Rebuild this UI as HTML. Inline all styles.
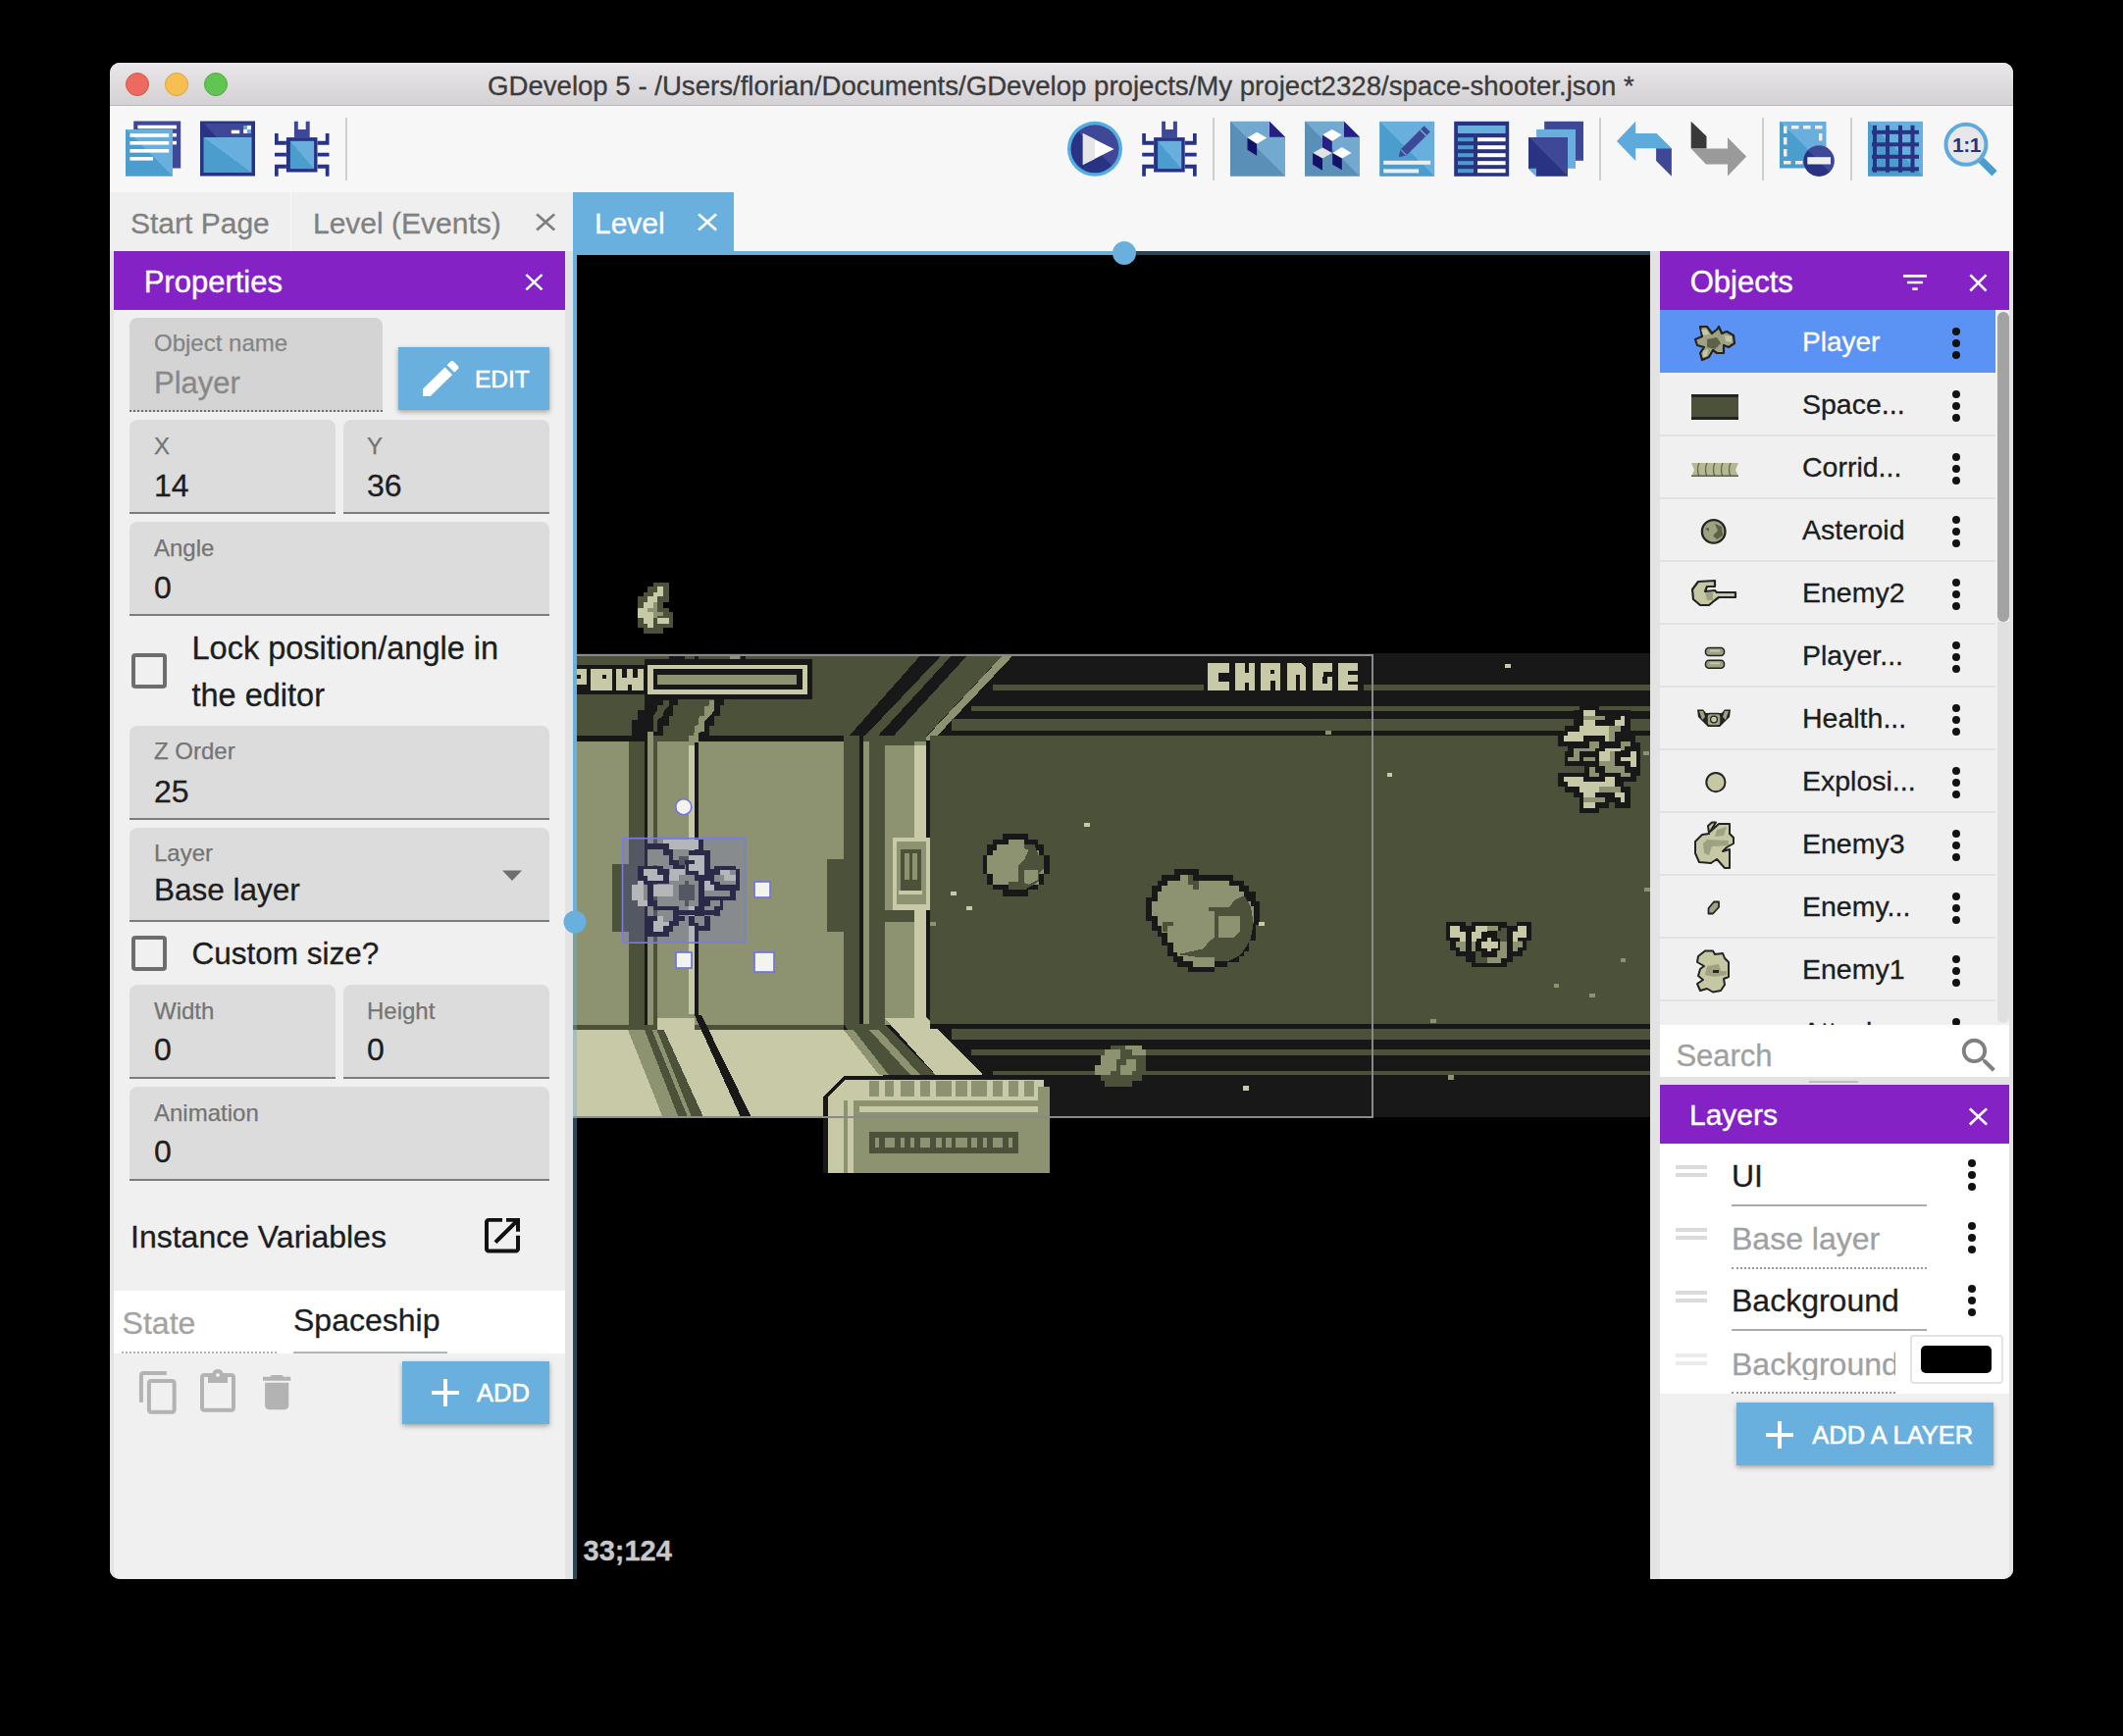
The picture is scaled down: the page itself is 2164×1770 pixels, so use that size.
<!DOCTYPE html>
<html><head><meta charset="utf-8">
<style>
*{box-sizing:border-box;margin:0;padding:0}
html,body{width:2164px;height:1770px;background:#000;overflow:hidden;font-family:"Liberation Sans",sans-serif}
.a{position:absolute}
.t{position:absolute;white-space:nowrap;line-height:1;-webkit-text-stroke:0.3px currentColor}
.fld{position:absolute;background:#dcdcdc;border-radius:8px 8px 0 0;border-bottom:2px solid #7c7c7c}
.lbl{position:absolute;white-space:nowrap;line-height:1;font-size:24px;color:#747474;-webkit-text-stroke:0.25px currentColor}
.val{position:absolute;white-space:nowrap;line-height:1;font-size:32px;color:#1d1d1d;-webkit-text-stroke:0.3px currentColor}
.hdr{position:absolute;background:#8422c6}
.hdrt{position:absolute;white-space:nowrap;line-height:1;font-size:31px;color:#fff;-webkit-text-stroke:0.4px currentColor}
.orow{position:absolute;left:1692px;width:342px;height:64px;border-bottom:2px solid #e2e2e2}
.ot{-webkit-text-stroke:0.3px currentColor;position:absolute;left:145px;top:18px;white-space:nowrap;line-height:1;font-size:28px;color:#1d1d1d}
.dots{position:absolute;width:8px;height:32px}
.dots i{position:absolute;left:0;width:8px;height:8px;border-radius:50%;background:#111}
.dots i:nth-child(1){top:0}.dots i:nth-child(2){top:12px}.dots i:nth-child(3){top:24px}
</style></head><body>
<!-- window base -->
<div class="a" style="left:112px;top:64px;width:1940px;height:1546px;border-radius:10px;background:#f7f7f7"></div>
<!-- title bar -->
<div class="a" style="left:112px;top:64px;width:1940px;height:44px;border-radius:10px 10px 0 0;background:linear-gradient(#e9e7e9,#d3d1d3);border-bottom:1px solid #bab8ba"></div>
<div class="a" style="left:128px;top:74px;width:24px;height:24px;border-radius:50%;background:#ee6a5f;border:1px solid #d8554b"></div>
<div class="a" style="left:168px;top:74px;width:24px;height:24px;border-radius:50%;background:#f6bf4f;border:1px solid #dea236"></div>
<div class="a" style="left:208px;top:74px;width:24px;height:24px;border-radius:50%;background:#61c554;border:1px solid #4fa83f"></div>
<div class="t" style="left:497px;top:73.6px;font-size:27.6px;color:#3b3b3b">GDevelop 5 - /Users/florian/Documents/GDevelop projects/My project2328/space-shooter.json *</div>

<svg class="a" style="left:0;top:0" width="2164" height="200" viewBox="0 0 2164 200">
<defs>
 <linearGradient id="gLB" x1="0" y1="1" x2="1" y2="0"><stop offset="0.5" stop-color="#4a9dcd"/><stop offset="0.5" stop-color="#68afde"/></linearGradient>
 <linearGradient id="gFile" x1="0" y1="1" x2="1" y2="0"><stop offset="0.5" stop-color="#5a90b8"/><stop offset="0.5" stop-color="#74a9cf"/></linearGradient>
 <linearGradient id="gFile2" x1="0" y1="0" x2="1" y2="1"><stop offset="0.5" stop-color="#68afde"/><stop offset="0.5" stop-color="#4a9dcd"/></linearGradient>
 <linearGradient id="gNavy" x1="0" y1="0" x2="1" y2="1"><stop offset="0.5" stop-color="#3f4896"/><stop offset="0.5" stop-color="#283384"/></linearGradient>
 <linearGradient id="gNavy2" x1="0" y1="1" x2="1" y2="0"><stop offset="0.5" stop-color="#283384"/><stop offset="0.5" stop-color="#3f4896"/></linearGradient>
 <g id="bug">
  <rect x="12.4" y="16.3" width="31.6" height="35.4" fill="#283384"/>
  <rect x="16.4" y="20" width="24.2" height="28.3" fill="url(#gLB)"/>
  <path d="M20.4 0h3.9v8.2h7.9V0h4v16.3H20.4z" fill="#3f4896"/>
  <path d="M0.5 12.1h3.7v7.9h8.2v4H0.5z M0.5 32h11.9v3.8H0.5z M0.5 44h11.9v4H4.2v8H0.5z" fill="#283384"/>
  <path d="M56 12.1h-3.7v7.9h-8.2v4H56z M56 32H44.1v3.8H56z M56 44H44.1v4h8.2v8H56z" fill="#283384"/>
 </g>
 <g id="page">
  <path d="M0 0H40L56 16V56H0z" fill="url(#gFile)"/>
  <path d="M40 0V16H56z" fill="#271f86"/>
 </g>
</defs>
<!-- icon1 project manager -->
<g transform="translate(128,123.5)">
 <rect x="8.2" y="0" width="48" height="48" fill="#3f4896"/>
 <rect x="12.4" y="4.2" width="39.6" height="3.6" fill="#fff"/>
 <rect x="48" y="12.4" width="4" height="3.6" fill="#fff"/>
 <rect x="48" y="20.3" width="4" height="3.6" fill="#fff"/>
 <rect x="0" y="8.5" width="48" height="47.7" fill="url(#gLB)"/>
 <rect x="4.4" y="12.7" width="39.8" height="3.6" fill="#fff"/>
 <rect x="4.4" y="20.5" width="39.8" height="3.6" fill="#fff"/>
 <rect x="4.4" y="28.5" width="39.8" height="3.6" fill="#fff"/>
 <rect x="4.4" y="36.5" width="23.6" height="3.6" fill="#fff"/>
</g>
<!-- icon2 scene -->
<g transform="translate(204,123.5)">
 <rect x="0" y="0" width="56" height="56" fill="#283384"/>
 <path d="M3.5 2.5H52.5V16.5H17z" fill="#3f4896"/>
 <rect x="3.5" y="16.5" width="49" height="36" fill="url(#gLB)"/>
 <rect x="31.8" y="9.2" width="8.4" height="3.5" fill="#fff"/>
 <rect x="44.2" y="4.5" width="7.7" height="8" fill="#68afde"/>
 <rect x="44.2" y="8.5" width="3.8" height="4" fill="#fff"/>
 <rect x="48" y="4.5" width="3.9" height="4" fill="#fff"/>
</g>
<use href="#bug" transform="translate(279.5,123.8)"/>
<rect x="352" y="120" width="2" height="64" fill="#cfcfcf"/>
<!-- play -->
<g transform="translate(1088,123.8)">
 <circle cx="28" cy="28" r="28" fill="#52ade3"/>
 <circle cx="28" cy="28" r="24.5" fill="url(#gNavy2)"/>
 <path d="M15.8 12.1L47.5 28.3L15.8 44.3z" fill="#fff"/>
 <path d="M15.8 12.1L28 18.3L28 38.1L15.8 44.3z" fill="#e6e6e8"/>
</g>
<use href="#bug" transform="translate(1163.7,123.8)"/>
<rect x="1236" y="120" width="2" height="64" fill="#cfcfcf"/>
<!-- page cube 1 -->
<g transform="translate(1254,123.8)">
 <use href="#page"/>
 <path d="M17.5 16.8L27.1 11L37.3 16.8L27.1 22.9z" fill="#fff"/>
 <path d="M17.5 16.8L27.1 22.9V35L17.5 29z" fill="#12126b"/>
</g>
<!-- page cubes 3 -->
<g transform="translate(1330,123.8)">
 <use href="#page"/>
 <path d="M18 13.8L27.8 8.2L37.8 13.8L27.8 20.2z" fill="#fff"/>
 <path d="M18 13.8L27.8 20.2V32.2L18 26.6z" fill="#271f86"/>
 <path d="M8.1 32.2L18 26.6L27.8 32.2L18 37.8z" fill="#e3e3e3"/>
 <path d="M8.1 32.2L18 37.8V49.9L8.1 44z" fill="#12126b"/>
 <path d="M28.2 32.2L37.8 26.3L47.6 32.2L37.8 37.8z" fill="#fff"/>
 <path d="M28.2 32.2L37.8 37.8V49.5L28.2 44z" fill="#12126b"/>
</g>
<!-- edit pencil -->
<g transform="translate(1406.2,123.8)">
 <rect width="56" height="56" fill="url(#gLB)"/>
 <path d="M19.8 36.2L21.5 28.5L45.5 4.5L51.6 10.6L27.5 34.5z" fill="#3f4896"/>
 <path d="M19.8 36.2L21.5 28.5L27.5 34.5z" fill="#3f4896"/>
 <path d="M41.5 8.5L47.5 14.5" stroke="#68afde" stroke-width="1.6"/>
 <path d="M21.5 28.5L27.5 34.5" stroke="#68afde" stroke-width="1.2"/>
 <rect x="4" y="40" width="48" height="4" fill="#eee"/>
 <rect x="4" y="48.6" width="36" height="4" fill="#eee"/>
</g>
<!-- table -->
<g transform="translate(1482.2,123.8)">
 <rect width="56" height="56" fill="#283384"/>
 <rect x="3.7" y="4.2" width="48.7" height="8" fill="#68afde"/>
 <g fill="#4a9dcd"><rect x="3.7" y="16.4" width="16.1" height="4"/><rect x="3.7" y="24.4" width="16.1" height="4"/><rect x="3.7" y="32.4" width="16.1" height="4"/><rect x="3.7" y="40.4" width="16.1" height="4"/><rect x="3.7" y="48.4" width="16.1" height="4"/></g>
 <g fill="#fff"><rect x="23.8" y="16.4" width="28.6" height="4"/><rect x="23.8" y="24.4" width="28.6" height="4"/><rect x="23.8" y="32.4" width="28.6" height="4"/><rect x="23.8" y="40.4" width="28.6" height="4"/><rect x="23.8" y="48.4" width="28.6" height="4"/></g>
</g>
<!-- layers -->
<g transform="translate(1558,123.8)">
 <rect x="16.2" y="0" width="39.8" height="40" fill="#3f4896"/>
 <rect x="8.1" y="8.1" width="39.9" height="39.9" fill="#68afde"/>
 <path d="M0 16.2H40V56H8L0 48z" fill="url(#gNavy2)"/>
 <path d="M0 48L8 48L8 56z" fill="#68afde"/>
</g>
<rect x="1630" y="120" width="2" height="64" fill="#cfcfcf"/>
<!-- undo -->
<g transform="translate(1648,123.8)">
 <path d="M0 20.2L19.2 0V12.1H40.6L55.9 27.4H19.2V40.3z" fill="#5eaadd"/>
 <path d="M0 20.2L19.2 0V12.1L8 24z" fill="#4a9dcd" opacity="0"/>
 <path d="M40.1 27.4H55.9V56L40.1 40.3z" fill="#3f4896"/>
</g>
<!-- redo -->
<g transform="translate(1723.7,123.8)">
 <path d="M0 0L15.8 15.3V27.7H0z" fill="#393939"/>
 <path d="M0 27.7H37.3V16.4L56.5 35.8L37.3 55.6V43.8H15.3z" fill="#9a9a9a"/>
</g>
<rect x="1796" y="120" width="2" height="64" fill="#cfcfcf"/>
<!-- remove selection -->
<g transform="translate(1814,124)">
 <rect width="47.5" height="47.5" fill="url(#gLB)"/>
 <g fill="#eee">
  <rect x="12" y="4" width="7.5" height="3.5"/><rect x="24" y="4" width="7.5" height="3.5"/><rect x="36" y="4" width="7.5" height="3.5"/>
  <rect x="4" y="4.5" width="3.5" height="7.5"/><rect x="4" y="16" width="3.5" height="7.5"/><rect x="4" y="28" width="3.5" height="7.5"/>
  <rect x="4" y="40" width="7.5" height="3.5"/><rect x="16" y="40" width="7.5" height="3.5"/>
  <rect x="40" y="12" width="3.5" height="7.5"/>
 </g>
 <circle cx="40.1" cy="40.1" r="15.8" fill="url(#gNavy2)"/>
 <rect x="28.3" y="36.2" width="23.7" height="7.3" fill="#eee"/>
</g>
<rect x="1886" y="120" width="2" height="64" fill="#cfcfcf"/>
<!-- grid -->
<g transform="translate(1904,123.8)">
 <rect width="56" height="56" fill="url(#gLB)"/>
 <g fill="#283384">
  <rect x="5" y="4" width="4" height="48"/><rect x="18" y="4" width="4" height="48"/><rect x="31" y="4" width="4" height="48"/><rect x="43.5" y="4" width="4" height="48"/>
  <rect x="4" y="9" width="48" height="4"/><rect x="4" y="21.5" width="48" height="4"/><rect x="4" y="34" width="48" height="4"/><rect x="4" y="46.5" width="48" height="4"/>
 </g>
</g>
<!-- zoom 1:1 -->
<g transform="translate(1980,123.8)">
 <path d="M37 37L53 53" stroke="#4a9dcd" stroke-width="7.5"/>
 <circle cx="24" cy="23.5" r="20.5" fill="#e7e7ea" stroke="#5eaadd" stroke-width="4"/>
 <text x="24.5" y="31.3" font-family="Liberation Sans" font-weight="bold" font-size="21" letter-spacing="-0.5" fill="#283384" text-anchor="middle">1:1</text>
</g>
</svg>

<!-- tabs -->
<div class="a" style="left:112px;top:196px;width:184px;height:60px;background:#efefef"></div>
<div class="a" style="left:297px;top:196px;width:287px;height:60px;background:#efefef"></div>
<div class="a" style="left:584px;top:196px;width:164px;height:60px;background:#69b0df"></div>
<div class="t" style="left:133px;top:212.6px;font-size:30px;color:#808080">Start Page</div>
<div class="t" style="left:319px;top:212.6px;font-size:30px;color:#808080">Level (Events)</div>
<div class="t" style="left:606px;top:212.6px;font-size:30px;color:#fff">Level</div>

<!-- left panel -->
<div class="a" style="left:112px;top:256px;width:472px;height:1354px;background:#e3e3e3;border-radius:0 0 0 10px"></div>
<div class="a" style="left:116px;top:256px;width:460px;height:1354px;background:#f0f0f0;border-radius:0 0 0 8px"></div>
<div class="hdr" style="left:116px;top:256px;width:460px;height:60px"></div>
<div class="hdrt" style="left:146.7px;top:271.6px">Properties</div>

<!-- fields -->
<div class="fld" style="left:132px;top:324px;width:258px;height:96px;background:#d4d4d4;border-bottom:2px dotted #6e6e6e"></div>
<div class="lbl" style="left:157px;top:338.3px;color:#848484">Object name</div>
<div class="val" style="left:157px;top:374.5px;font-size:31px;color:#888">Player</div>

<div class="a" style="left:406px;top:354px;width:154px;height:64px;background:#69b0df;box-shadow:0 2px 5px rgba(0,0,0,.33)"></div>
<div class="t" style="left:484px;top:374.6px;font-size:24.5px;font-weight:normal;-webkit-text-stroke:0.6px #fff;color:#fff">EDIT</div>

<div class="fld" style="left:132px;top:428px;width:210px;height:96px"></div>
<div class="fld" style="left:350px;top:428px;width:210px;height:96px"></div>
<div class="lbl" style="left:157px;top:442.7px">X</div>
<div class="val" style="left:157px;top:478.9px">14</div>
<div class="lbl" style="left:374px;top:442.7px">Y</div>
<div class="val" style="left:374px;top:478.9px">36</div>

<div class="fld" style="left:132px;top:532px;width:428px;height:96px"></div>
<div class="lbl" style="left:157px;top:546.7px">Angle</div>
<div class="val" style="left:157px;top:582.5px">0</div>

<div class="a" style="left:134px;top:666px;width:36px;height:36px;border:4px solid #6e6e6e;border-radius:4px"></div>
<div class="t" style="left:195.5px;top:645.4px;font-size:32.5px;color:#1d1d1d">Lock position/angle in</div>
<div class="t" style="left:195.5px;top:692.9px;font-size:32.5px;color:#1d1d1d">the editor</div>

<div class="fld" style="left:132px;top:740px;width:428px;height:96px"></div>
<div class="lbl" style="left:157px;top:754.4px">Z Order</div>
<div class="val" style="left:157px;top:790.5px">25</div>

<div class="fld" style="left:132px;top:844px;width:428px;height:96px"></div>
<div class="lbl" style="left:157px;top:858.4px">Layer</div>
<div class="val" style="left:157px;top:892.3px;font-size:31.5px">Base layer</div>

<div class="a" style="left:134px;top:954px;width:36px;height:36px;border:4px solid #6e6e6e;border-radius:4px"></div>
<div class="t" style="left:195.5px;top:956.9px;font-size:31.5px;color:#1d1d1d">Custom size?</div>

<div class="fld" style="left:132px;top:1004px;width:210px;height:96px"></div>
<div class="fld" style="left:350px;top:1004px;width:210px;height:96px"></div>
<div class="lbl" style="left:157px;top:1018.5px">Width</div>
<div class="val" style="left:157px;top:1054.2px">0</div>
<div class="lbl" style="left:374px;top:1018.5px">Height</div>
<div class="val" style="left:374px;top:1054.2px">0</div>

<div class="fld" style="left:132px;top:1108px;width:428px;height:96px"></div>
<div class="lbl" style="left:157px;top:1123.2px">Animation</div>
<div class="val" style="left:157px;top:1158.2px">0</div>

<div class="t" style="left:133px;top:1244.5px;font-size:32px;color:#1d1d1d">Instance Variables</div>

<div class="a" style="left:116px;top:1316px;width:460px;height:64px;background:#fff"></div>
<div class="t" style="left:124.6px;top:1332.9px;font-size:32px;color:#a3a3a3">State</div>
<div class="a" style="left:124px;top:1378px;width:158px;height:0;border-bottom:2px dotted #b0b0b0"></div>
<div class="t" style="left:299px;top:1329.9px;font-size:32px;color:#1d1d1d">Spaceship</div>
<div class="a" style="left:299px;top:1378px;width:157px;height:2px;background:#b4b4b4"></div>

<div class="a" style="left:410px;top:1388px;width:150px;height:64px;background:#69b0df;box-shadow:0 2px 5px rgba(0,0,0,.33)"></div>
<div class="t" style="left:486px;top:1408.2px;font-size:25.5px;font-weight:normal;-webkit-text-stroke:0.6px #fff;color:#fff">ADD</div>

<!-- canvas -->
<div class="a" style="left:584px;top:256px;width:1098px;height:1354px;background:#000"></div>
<svg class="a" style="left:0;top:0" width="2164" height="1770" viewBox="0 0 2164 1770">
<defs><clipPath id="cv"><rect x="584" y="260" width="1098" height="1350"/></clipPath></defs>
<g clip-path="url(#cv)" shape-rendering="crispEdges">
<rect x="584.0" y="666.0" width="1098.0" height="473.0" fill="#181818"/>
<polygon points="584.0,668.0 1022.0,668.0 940.0,755.0 584.0,755.0" fill="#4c5139" />
<rect x="682.0" y="668.0" width="15.5" height="4.2" fill="#181818"/>
<rect x="707.9" y="668.0" width="4.2" height="4.2" fill="#181818"/>
<rect x="754.5" y="668.0" width="5.2" height="4.2" fill="#181818"/>
<rect x="743.7" y="668.0" width="10.4" height="4.2" fill="#8d9270"/>
<rect x="584.0" y="677.9" width="72.5" height="29.7" fill="#181818"/>
<rect x="588.1" y="682.1" width="10.0" height="15.5" fill="#c8caa7"/>
<rect x="601.9" y="682.1" width="22.1" height="21.7" fill="#c8caa7"/>
<rect x="627.8" y="682.1" width="28.3" height="21.7" fill="#c8caa7"/>
<rect x="588.1" y="688.3" width="3.9" height="3.8" fill="#181818"/>
<rect x="614.1" y="688.3" width="3.8" height="3.8" fill="#181818"/>
<rect x="634.4" y="682.1" width="4.7" height="8.9" fill="#181818"/>
<rect x="644.8" y="682.1" width="4.7" height="8.9" fill="#181818"/>
<rect x="640.1" y="698.2" width="3.8" height="5.7" fill="#181818"/>
<rect x="656.5" y="672.2" width="171.5" height="41.0" fill="#181818"/>
<rect x="659.8" y="677.9" width="162.7" height="30.3" fill="#c8caa7"/>
<rect x="666.0" y="682.1" width="152.0" height="21.2" fill="#181818"/>
<rect x="669.7" y="687.8" width="142.3" height="10.4" fill="#8d9270"/>
<polygon points="657.5,707.6 691.4,713.2 691.4,719.3 685.7,719.3 685.7,729.7 681.5,729.7 681.5,739.6 675.9,739.6 675.9,749.5 670.2,749.5 666.0,755.6 644.3,755.6 644.3,734.4 649.9,734.4 649.9,724.1 656.5,724.1 656.5,707.6" fill="#181818" />
<polygon points="675.9,714.2 682.4,714.2 682.4,719.3 676.8,725.0 675.9,729.7 670.2,734.4 669.7,745.7 666.0,745.7 666.0,729.7 669.7,725.0 669.7,719.3 675.9,719.3" fill="#4c5139" />
<polygon points="728.1,713.2 737.6,713.2 737.6,719.3 733.8,719.3 733.8,729.7 727.7,729.7 727.7,739.6 723.4,739.6 723.4,749.5 717.8,749.5 717.8,759.9 707.9,759.9 707.9,757.0 712.1,757.0 712.1,746.7" fill="#181818" />
<polygon points="723.4,714.2 728.1,714.2 727.7,725.0 723.4,730.2 717.8,735.4 717.8,746.2 712.1,746.7 712.1,757.0 701.8,759.9 701.8,750.4 707.4,749.5 707.9,740.1 712.1,739.1 712.6,730.2 717.8,729.7 717.8,720.3 723.4,719.3" fill="#8d9270" />
<polygon points="938.2,668.3 959.6,668.3 880.0,752.0 864.0,752.0" fill="#181818" />
<polygon points="970.0,668.3 986.0,668.3 902.0,760.0 886.0,760.0" fill="#181818" />
<polygon points="1022.0,668.3 1032.5,668.3 948.0,758.0 938.0,758.0" fill="#8d9270" />
<rect x="584.0" y="750.0" width="72.5" height="5.6" fill="#181818"/>
<rect x="711.6" y="750.0" width="166.0" height="5.6" fill="#181818"/>
<rect x="659.8" y="745.7" width="6.2" height="14.3" fill="#8d9270"/>
<rect x="666.0" y="750.0" width="35.8" height="9.9" fill="#4c5139"/>
<rect x="701.8" y="755.6" width="6.1" height="4.3" fill="#8d9270"/>
<rect x="880.0" y="750.0" width="63.7" height="9.8" fill="#4c5139"/>
<rect x="584.0" y="755.6" width="364.0" height="288.9" fill="#8d9270"/>
<rect x="640.5" y="755.6" width="16.0" height="288.9" fill="#4c5139"/>
<rect x="656.5" y="713.0" width="3.3" height="331.5" fill="#181818"/>
<rect x="666.0" y="750.0" width="3.7" height="294.5" fill="#4c5139"/>
<rect x="701.8" y="759.9" width="6.1" height="274.1" fill="#c8caa7"/>
<rect x="707.9" y="757.0" width="3.7" height="278.0" fill="#181818"/>
<rect x="623.5" y="881.0" width="17.0" height="69.0" fill="#4c5139"/>
<rect x="859.8" y="750.0" width="15.9" height="294.5" fill="#4c5139"/>
<rect x="875.7" y="750.0" width="4.3" height="294.5" fill="#181818"/>
<rect x="886.0" y="750.0" width="16.0" height="294.5" fill="#4c5139"/>
<rect x="902.0" y="750.0" width="30.0" height="9.8" fill="#4c5139"/>
<rect x="902.0" y="927.6" width="30.0" height="12.4" fill="#4c5139"/>
<rect x="932.0" y="759.8" width="11.7" height="284.7" fill="#c8caa7"/>
<rect x="943.7" y="755.0" width="4.3" height="282.0" fill="#181818"/>
<rect x="843.0" y="875.7" width="16.8" height="74.3" fill="#4c5139"/>
<rect x="910.0" y="854.0" width="38.0" height="74.3" fill="#c8caa7"/>
<rect x="914.0" y="858.0" width="29.7" height="64.0" fill="#8d9270"/>
<rect x="918.0" y="866.0" width="21.0" height="46.0" fill="#4c5139"/>
<rect x="922.0" y="870.0" width="5.0" height="27.0" fill="#8d9270"/>
<rect x="930.0" y="870.0" width="5.0" height="27.0" fill="#8d9270"/>
<rect x="916.0" y="908.0" width="24.0" height="4.0" fill="#c8caa7"/>
<rect x="584.0" y="1044.5" width="276.0" height="5.5" fill="#4c5139"/>
<rect x="584.0" y="1050.0" width="316.0" height="89.0" fill="#c8caa7"/>
<rect x="669.7" y="1037.6" width="38.3" height="12.4" fill="#c8caa7"/>
<polygon points="640.0,1050.0 657.0,1050.0 676.0,1139.0 691.5,1139.0" fill="#8d9270" />
<polygon points="640.0,1050.0 657.0,1050.0 691.5,1139.0 675.5,1139.0" fill="#8d9270" />
<polygon points="657.0,1050.0 664.5,1050.0 701.0,1139.0 691.5,1139.0" fill="#4c5139" />
<polygon points="664.5,1050.0 669.4,1050.0 705.0,1139.0 701.0,1139.0" fill="#8d9270" />
<polygon points="669.4,1050.0 676.7,1050.0 717.0,1139.0 705.0,1139.0" fill="#4c5139" />
<polygon points="708.0,1035.0 715.0,1035.0 766.0,1139.0 755.0,1139.0" fill="#181818" />
<polygon points="901.6,1037.8 944.5,1037.8 1002.0,1096.0 953.7,1096.0" fill="#c8caa7" />
<polygon points="860.0,1044.0 901.6,1044.0 953.7,1096.0 896.0,1096.0" fill="#4c5139" />
<polygon points="860.0,1050.0 870.0,1050.0 906.0,1096.0 896.0,1096.0" fill="#8d9270" />
<polygon points="886.0,1050.0 896.0,1050.0 938.0,1096.0 928.0,1096.0" fill="#8d9270" />
<polygon points="944.5,1037.0 950.0,1037.0 1010.0,1096.0 1002.0,1096.0" fill="#181818" />
<rect x="948.0" y="1043.9" width="734.0" height="5.5" fill="#181818"/>
<rect x="970.2" y="1049.4" width="711.8" height="11.0" fill="#4c5139"/>
<rect x="989.8" y="1069.6" width="692.2" height="6.1" fill="#4c5139"/>
<rect x="1011.9" y="1091.6" width="670.1" height="4.3" fill="#4c5139"/>
<rect x="948.0" y="750.0" width="734.0" height="293.9" fill="#4c5139"/>
<rect x="1011.7" y="697.8" width="214.8" height="6.4" fill="#4c5139"/>
<rect x="1390.4" y="697.8" width="291.6" height="6.4" fill="#4c5139"/>
<rect x="989.6" y="720.0" width="692.4" height="4.5" fill="#4c5139"/>
<rect x="970.0" y="733.4" width="712.0" height="11.9" fill="#4c5139"/>
<rect x="1231.4" y="676.4" width="21.2" height="27.2" fill="#c8caa7"/>
<rect x="1258.6" y="676.4" width="20.0" height="27.2" fill="#c8caa7"/>
<rect x="1285.0" y="676.4" width="20.0" height="27.2" fill="#c8caa7"/>
<rect x="1311.5" y="676.4" width="19.5" height="27.2" fill="#c8caa7"/>
<rect x="1338.0" y="676.4" width="20.0" height="27.2" fill="#c8caa7"/>
<rect x="1364.3" y="676.4" width="20.0" height="27.2" fill="#c8caa7"/>
<rect x="1241.8" y="685.6" width="10.8" height="9.2" fill="#181818"/>
<rect x="1268.6" y="676.4" width="4.4" height="9.6" fill="#181818"/>
<rect x="1268.6" y="695.6" width="4.4" height="8.0" fill="#181818"/>
<rect x="1294.7" y="683.2" width="4.3" height="4.0" fill="#181818"/>
<rect x="1294.7" y="694.0" width="4.8" height="9.6" fill="#181818"/>
<polygon points="1327.0,676.4 1331.0,676.4 1331.0,681.0" fill="#181818" />
<rect x="1321.0" y="688.4" width="4.0" height="15.2" fill="#181818"/>
<rect x="1348.8" y="685.2" width="9.2" height="4.8" fill="#181818"/>
<rect x="1347.5" y="690.0" width="5.5" height="7.2" fill="#181818"/>
<rect x="1374.0" y="684.0" width="10.3" height="4.4" fill="#181818"/>
<rect x="1374.0" y="694.8" width="10.3" height="3.2" fill="#181818"/>
<polygon points="860.6,1096.5 1064.0,1096.5 1064.0,1139.0 1070.0,1139.0 1070.0,1196.4 838.6,1196.4 838.6,1118.6" fill="#181818" />
<polygon points="861.0,1101.4 1064.0,1101.4 1064.0,1121.6 843.5,1121.6 843.5,1119.0" fill="#c8caa7" />
<rect x="886.3" y="1102.0" width="9.8" height="16.0" fill="#8d9270"/>
<rect x="902.3" y="1102.0" width="9.1" height="16.0" fill="#8d9270"/>
<rect x="918.2" y="1102.0" width="13.5" height="16.0" fill="#8d9270"/>
<rect x="938.4" y="1102.0" width="9.2" height="16.0" fill="#8d9270"/>
<rect x="954.3" y="1102.0" width="15.3" height="16.0" fill="#8d9270"/>
<rect x="973.9" y="1102.0" width="12.3" height="16.0" fill="#8d9270"/>
<rect x="990.4" y="1102.0" width="15.4" height="16.0" fill="#8d9270"/>
<rect x="1011.9" y="1102.0" width="9.8" height="16.0" fill="#8d9270"/>
<rect x="1027.8" y="1102.0" width="9.8" height="16.0" fill="#8d9270"/>
<rect x="1044.3" y="1102.0" width="9.8" height="16.0" fill="#8d9270"/>
<rect x="843.5" y="1121.6" width="226.5" height="74.8" fill="#8d9270"/>
<rect x="1057.8" y="1107.6" width="12.2" height="14.0" fill="#8d9270"/>
<rect x="876.0" y="1127.8" width="181.8" height="6.1" fill="#c8caa7"/>
<rect x="843.5" y="1121.6" width="16.5" height="74.8" fill="#c8caa7"/>
<rect x="864.3" y="1121.6" width="5.5" height="74.8" fill="#c8caa7"/>
<rect x="886.3" y="1154.1" width="151.9" height="22.0" fill="#4c5139"/>
<rect x="891.8" y="1160.3" width="4.3" height="9.7" fill="#8d9270"/>
<rect x="901.6" y="1160.3" width="10.4" height="9.7" fill="#8d9270"/>
<rect x="918.2" y="1160.3" width="3.7" height="9.7" fill="#8d9270"/>
<rect x="928.0" y="1160.3" width="3.7" height="9.7" fill="#8d9270"/>
<rect x="937.8" y="1160.3" width="10.4" height="9.7" fill="#8d9270"/>
<rect x="953.7" y="1160.3" width="6.1" height="9.7" fill="#8d9270"/>
<rect x="964.1" y="1160.3" width="6.1" height="9.7" fill="#8d9270"/>
<rect x="973.9" y="1160.3" width="12.2" height="9.7" fill="#8d9270"/>
<rect x="990.4" y="1160.3" width="5.5" height="9.7" fill="#8d9270"/>
<rect x="1002.1" y="1160.3" width="4.3" height="9.7" fill="#8d9270"/>
<rect x="1011.9" y="1160.3" width="10.4" height="9.7" fill="#8d9270"/>
<rect x="1027.8" y="1160.3" width="4.3" height="9.7" fill="#8d9270"/>
<rect x="584.0" y="666.5" width="815.0" height="2.0" fill="#8a8a8a"/>
<rect x="1398.0" y="666.5" width="2.0" height="473.5" fill="#8a8a8a"/>
<rect x="584.0" y="1138.2" width="815.0" height="2.2" fill="#8a8a8a"/>
<polygon points="1022.1,850.4 1047.7,850.4 1047.7,856.3 1057.9,856.3 1057.9,860.7 1063.7,860.7 1063.7,872.3 1069.6,872.3 1069.6,891.3 1063.7,891.3 1063.7,901.6 1057.9,901.6 1057.9,907.4 1047.7,907.4 1047.7,914.0 1022.1,914.0 1022.1,907.4 1011.9,907.4 1011.9,901.6 1006.1,901.6 1006.1,891.3 1001.7,891.3 1001.7,872.3 1006.1,872.3 1006.1,860.7 1011.9,860.7 1011.9,856.3 1022.1,856.3" fill="#181818" />
<polygon points="1028.0,856.3 1044.0,856.3 1044.0,860.7 1054.3,860.7 1054.3,866.5 1058.6,866.5 1058.6,872.3 1063.7,872.3 1063.7,891.3 1058.6,891.3 1058.6,901.6 1044.0,901.6 1044.0,907.4 1028.0,907.4 1028.0,901.6 1011.9,901.6 1011.9,891.3 1006.1,891.3 1006.1,872.3 1011.9,872.3 1011.9,866.5 1016.3,866.5 1016.3,860.7 1028.0,860.7" fill="#8d9270" />
<polygon points="1044.0,860.7 1054.3,860.7 1058.6,872.3 1063.7,872.3 1063.7,885.5 1058.6,891.3 1058.6,898.6 1054.3,901.6 1044.0,907.4 1028.0,907.4 1028.0,898.6 1038.2,898.6 1038.2,882.6 1044.0,876.7 1048.4,866.5 1044.0,865.0" fill="#4c5139" />
<polygon points="1044.0,887.0 1057.9,887.0 1057.9,897.2 1048.4,901.6 1044.0,900.1" fill="#8d9270" />
<polygon points="1196.6,886.2 1221.5,886.2 1221.5,892.1 1257.2,892.1 1257.2,897.9 1267.5,897.9 1267.5,903.0 1273.3,903.0 1273.3,908.9 1279.9,908.9 1279.9,919.1 1283.5,919.1 1283.5,943.2 1279.9,943.2 1279.9,959.2 1273.3,959.2 1273.3,969.5 1267.5,969.5 1267.5,975.3 1263.1,975.3 1263.1,981.1 1251.4,981.1 1251.4,986.2 1237.5,986.2 1237.5,991.4 1210.5,991.4 1210.5,986.2 1200.3,986.2 1200.3,981.1 1195.9,981.1 1195.9,975.3 1190.1,975.3 1190.1,964.3 1184.2,964.3 1184.2,954.9 1179.8,954.9 1179.8,949.0 1174.0,949.0 1174.0,938.8 1168.2,938.8 1168.2,914.7 1174.0,914.7 1174.0,903.0 1179.8,903.0 1179.8,897.9 1184.2,897.9 1184.2,892.1 1196.6,892.1" fill="#181818" />
<polygon points="1202.5,892.1 1216.3,892.1 1216.3,897.9 1252.9,897.9 1252.9,903.0 1263.1,903.0 1263.1,908.9 1268.2,908.9 1268.2,919.1 1274.8,919.1 1274.8,924.2 1277.7,924.2 1277.7,941.0 1274.8,941.0 1274.8,957.0 1268.2,957.0 1268.2,968.7 1263.1,968.7 1263.1,974.6 1251.4,974.6 1251.4,980.4 1237.5,980.4 1237.5,985.5 1216.3,985.5 1216.3,980.4 1206.1,980.4 1206.1,975.3 1200.3,975.3 1200.3,970.9 1195.9,970.9 1195.9,960.7 1190.1,960.7 1190.1,951.2 1184.2,951.2 1184.2,943.9 1179.8,943.9 1179.8,933.7 1174.0,933.7 1174.0,919.1 1179.8,919.1 1179.8,908.9 1184.2,908.9 1184.2,903.0 1190.1,903.0 1190.1,897.9 1202.5,897.9" fill="#8d9270" />
<polygon points="1232.4,924.9 1252.9,924.9 1258.7,917.6 1268.2,913.2 1274.8,924.2 1277.7,941.0 1274.8,957.0 1268.2,968.7 1263.1,974.6 1251.4,980.4 1238.2,980.4 1222.2,976.0 1200.3,973.1 1226.6,967.3 1232.4,960.0 1238.2,955.6 1238.2,929.3 1232.4,929.3" fill="#4c5139" />
<polygon points="1241.9,933.7 1263.8,933.7 1263.8,949.7 1258.0,955.6 1241.9,955.6" fill="#8d9270" />
<polygon points="1222.2,976.0 1238.2,976.0 1238.2,981.1 1216.3,981.1" fill="#8d9270" />
<polygon points="1210.5,892.1 1216.3,892.1 1216.3,897.9 1221.5,897.9 1221.5,907.4 1216.3,907.4 1216.3,901.6 1210.5,901.6" fill="#4c5139" />
<polygon points="1184.9,940.3 1195.9,940.3 1195.9,943.9 1190.1,943.9 1190.1,949.7 1184.9,949.7" fill="#4c5139" />
<rect x="1132.2" y="1066.0" width="31.8" height="4.2" fill="#4c5139"/>
<rect x="1126.2" y="1070.2" width="41.3" height="6.0" fill="#4c5139"/>
<rect x="1122.0" y="1076.2" width="45.6" height="9.9" fill="#4c5139"/>
<rect x="1116.0" y="1086.1" width="51.6" height="9.9" fill="#4c5139"/>
<rect x="1122.0" y="1096.0" width="42.0" height="6.0" fill="#4c5139"/>
<rect x="1126.2" y="1102.0" width="27.6" height="6.0" fill="#4c5139"/>
<rect x="1147.4" y="1066.0" width="16.6" height="4.2" fill="#8d9270"/>
<rect x="1153.7" y="1070.2" width="13.8" height="6.0" fill="#8d9270"/>
<rect x="1126.2" y="1070.2" width="15.9" height="10.2" fill="#8d9270"/>
<rect x="1122.0" y="1076.2" width="16.2" height="9.9" fill="#8d9270"/>
<rect x="1116.0" y="1086.1" width="22.3" height="5.7" fill="#8d9270"/>
<rect x="1116.0" y="1091.7" width="16.2" height="4.2" fill="#8d9270"/>
<rect x="1148.1" y="1079.7" width="9.9" height="6.4" fill="#8d9270"/>
<rect x="1142.1" y="1086.1" width="15.9" height="5.7" fill="#8d9270"/>
<rect x="1142.1" y="1091.7" width="11.7" height="4.2" fill="#8d9270"/>
<rect x="1474.1" y="940.1" width="19.8" height="18.8" fill="#181818"/>
<rect x="1478.0" y="958.9" width="10.2" height="10.2" fill="#181818"/>
<rect x="1484.3" y="966.2" width="15.8" height="9.2" fill="#181818"/>
<rect x="1493.9" y="944.4" width="6.3" height="36.9" fill="#181818"/>
<rect x="1500.1" y="940.1" width="35.6" height="45.5" fill="#181818"/>
<rect x="1535.7" y="944.4" width="5.9" height="36.9" fill="#181818"/>
<rect x="1541.7" y="944.4" width="4.0" height="4.6" fill="#181818"/>
<rect x="1545.6" y="940.1" width="15.8" height="18.8" fill="#181818"/>
<rect x="1551.6" y="958.9" width="4.0" height="10.2" fill="#181818"/>
<rect x="1541.7" y="966.2" width="9.9" height="9.2" fill="#181818"/>
<rect x="1530.1" y="976.7" width="11.5" height="4.6" fill="#181818"/>
<rect x="1478.0" y="943.7" width="10.2" height="12.5" fill="#c8caa7"/>
<rect x="1488.2" y="949.7" width="5.6" height="9.9" fill="#c8caa7"/>
<rect x="1546.6" y="943.7" width="9.6" height="12.5" fill="#c8caa7"/>
<rect x="1542.0" y="949.7" width="4.6" height="9.9" fill="#c8caa7"/>
<rect x="1504.1" y="944.1" width="11.9" height="5.6" fill="#c8caa7"/>
<rect x="1500.1" y="949.7" width="10.2" height="9.9" fill="#c8caa7"/>
<rect x="1484.3" y="960.2" width="9.6" height="5.9" fill="#8d9270"/>
<rect x="1488.2" y="966.2" width="5.6" height="4.0" fill="#8d9270"/>
<rect x="1542.0" y="960.2" width="9.6" height="5.9" fill="#8d9270"/>
<rect x="1542.0" y="966.2" width="4.6" height="4.0" fill="#8d9270"/>
<rect x="1515.9" y="944.1" width="10.6" height="4.9" fill="#8d9270"/>
<rect x="1500.1" y="959.6" width="4.0" height="10.6" fill="#8d9270"/>
<rect x="1525.8" y="959.6" width="9.9" height="17.1" fill="#8d9270"/>
<rect x="1515.9" y="976.1" width="14.2" height="5.9" fill="#8d9270"/>
<rect x="1525.8" y="949.0" width="9.9" height="10.6" fill="#4c5139"/>
<rect x="1504.1" y="970.1" width="11.9" height="11.9" fill="#4c5139"/>
<rect x="1530.1" y="946.4" width="5.6" height="2.6" fill="#4c5139"/>
<rect x="1510.3" y="950.7" width="15.5" height="25.1" fill="#181818"/>
<rect x="1504.7" y="956.6" width="24.7" height="12.5" fill="#181818"/>
<rect x="1515.6" y="955.9" width="4.6" height="14.2" fill="#c8caa7"/>
<rect x="1510.0" y="960.2" width="16.5" height="6.3" fill="#c8caa7"/>
<rect x="1610.1" y="719.1" width="19.7" height="4.8" fill="#181818"/>
<rect x="1604.2" y="724.0" width="57.4" height="15.9" fill="#181818"/>
<rect x="1594.5" y="739.9" width="67.0" height="6.2" fill="#181818"/>
<rect x="1588.3" y="746.1" width="79.1" height="10.4" fill="#181818"/>
<rect x="1588.3" y="756.5" width="83.3" height="4.8" fill="#181818"/>
<rect x="1598.0" y="761.3" width="73.6" height="4.8" fill="#181818"/>
<rect x="1594.5" y="766.1" width="77.1" height="15.2" fill="#181818"/>
<rect x="1614.6" y="781.3" width="57.0" height="6.9" fill="#181818"/>
<rect x="1588.3" y="788.3" width="83.3" height="2.8" fill="#181818"/>
<rect x="1588.3" y="791.0" width="79.5" height="6.2" fill="#181818"/>
<rect x="1588.3" y="797.2" width="67.0" height="4.8" fill="#181818"/>
<rect x="1594.5" y="802.1" width="67.0" height="5.5" fill="#181818"/>
<rect x="1604.2" y="807.6" width="57.4" height="5.5" fill="#181818"/>
<rect x="1610.1" y="813.1" width="51.5" height="4.8" fill="#181818"/>
<rect x="1610.1" y="818.0" width="29.4" height="5.5" fill="#181818"/>
<rect x="1646.3" y="818.0" width="15.2" height="5.5" fill="#181818"/>
<rect x="1610.1" y="823.5" width="19.7" height="5.5" fill="#181818"/>
<rect x="1613.9" y="724.0" width="12.1" height="6.2" fill="#c8caa7"/>
<rect x="1613.9" y="734.4" width="12.1" height="5.5" fill="#c8caa7"/>
<rect x="1610.1" y="739.9" width="29.7" height="6.2" fill="#c8caa7"/>
<rect x="1598.0" y="746.1" width="41.8" height="4.1" fill="#c8caa7"/>
<rect x="1593.8" y="750.2" width="20.0" height="5.5" fill="#c8caa7"/>
<rect x="1635.6" y="750.2" width="4.1" height="5.5" fill="#c8caa7"/>
<rect x="1646.0" y="734.4" width="10.0" height="5.5" fill="#c8caa7"/>
<rect x="1651.9" y="729.9" width="4.5" height="10.0" fill="#c8caa7"/>
<rect x="1636.0" y="762.7" width="16.2" height="3.5" fill="#c8caa7"/>
<rect x="1629.8" y="766.1" width="10.7" height="9.7" fill="#c8caa7"/>
<rect x="1651.9" y="772.4" width="10.4" height="3.8" fill="#c8caa7"/>
<rect x="1662.2" y="766.1" width="5.9" height="15.9" fill="#c8caa7"/>
<rect x="1593.8" y="791.7" width="20.0" height="5.5" fill="#c8caa7"/>
<rect x="1598.0" y="797.2" width="48.0" height="4.8" fill="#c8caa7"/>
<rect x="1610.1" y="802.1" width="19.7" height="5.5" fill="#c8caa7"/>
<rect x="1613.9" y="807.6" width="12.1" height="5.5" fill="#c8caa7"/>
<rect x="1613.9" y="818.0" width="12.1" height="5.5" fill="#c8caa7"/>
<rect x="1636.0" y="791.7" width="10.0" height="10.4" fill="#c8caa7"/>
<rect x="1646.3" y="807.6" width="9.7" height="5.5" fill="#c8caa7"/>
<rect x="1651.9" y="813.1" width="4.1" height="4.8" fill="#c8caa7"/>
<rect x="1613.9" y="730.2" width="22.1" height="3.8" fill="#8d9270"/>
<rect x="1640.1" y="739.9" width="11.7" height="6.2" fill="#8d9270"/>
<rect x="1640.1" y="746.1" width="5.9" height="9.7" fill="#8d9270"/>
<rect x="1620.1" y="755.8" width="9.7" height="6.9" fill="#8d9270"/>
<rect x="1604.2" y="762.7" width="21.8" height="3.5" fill="#8d9270"/>
<rect x="1604.2" y="766.1" width="5.9" height="5.5" fill="#8d9270"/>
<rect x="1598.0" y="771.7" width="12.1" height="4.1" fill="#8d9270"/>
<rect x="1613.9" y="771.7" width="12.1" height="4.1" fill="#8d9270"/>
<rect x="1651.9" y="755.8" width="10.4" height="5.5" fill="#8d9270"/>
<rect x="1652.2" y="761.3" width="3.8" height="4.1" fill="#8d9270"/>
<rect x="1640.5" y="766.1" width="5.9" height="9.7" fill="#8d9270"/>
<rect x="1629.8" y="775.8" width="16.6" height="5.5" fill="#8d9270"/>
<rect x="1636.0" y="781.3" width="20.0" height="6.2" fill="#8d9270"/>
<rect x="1651.9" y="787.6" width="10.4" height="4.1" fill="#8d9270"/>
<rect x="1620.1" y="782.0" width="5.9" height="9.7" fill="#8d9270"/>
<rect x="1626.0" y="787.6" width="3.8" height="4.1" fill="#8d9270"/>
<rect x="1629.8" y="802.1" width="22.5" height="5.5" fill="#8d9270"/>
<rect x="1613.9" y="813.1" width="22.1" height="4.8" fill="#8d9270"/>
<rect x="666.2" y="594.1" width="15.4" height="3.9" fill="#4c5139"/>
<rect x="660.0" y="598.0" width="21.7" height="6.0" fill="#4c5139"/>
<rect x="656.0" y="604.0" width="25.6" height="4.1" fill="#4c5139"/>
<rect x="650.0" y="608.1" width="31.6" height="6.0" fill="#4c5139"/>
<rect x="650.0" y="614.1" width="26.0" height="6.0" fill="#4c5139"/>
<rect x="650.0" y="620.1" width="31.6" height="3.7" fill="#4c5139"/>
<rect x="650.0" y="623.8" width="35.7" height="16.1" fill="#4c5139"/>
<rect x="656.0" y="639.9" width="19.8" height="6.0" fill="#4c5139"/>
<rect x="670.1" y="598.0" width="5.8" height="10.1" fill="#c8caa7"/>
<rect x="666.2" y="604.0" width="3.9" height="4.1" fill="#c8caa7"/>
<rect x="660.0" y="608.1" width="10.1" height="6.0" fill="#c8caa7"/>
<rect x="656.0" y="614.1" width="11.8" height="6.0" fill="#c8caa7"/>
<rect x="650.0" y="620.1" width="9.9" height="10.1" fill="#c8caa7"/>
<rect x="656.0" y="623.8" width="9.9" height="12.4" fill="#c8caa7"/>
<rect x="660.0" y="630.2" width="6.0" height="9.7" fill="#c8caa7"/>
<rect x="670.1" y="630.2" width="11.5" height="5.5" fill="#c8caa7"/>
<rect x="660.0" y="620.1" width="10.1" height="3.7" fill="#8d9270"/>
<rect x="665.9" y="614.1" width="4.1" height="16.1" fill="#8d9270"/>
<rect x="667.8" y="623.8" width="8.1" height="4.1" fill="#8d9270"/>
<rect x="1105.3" y="838.8" width="5.4" height="4.4" fill="#c8caa7"/>
<rect x="1351.1" y="745.0" width="5.4" height="4.4" fill="#8d9270"/>
<rect x="1413.9" y="787.8" width="5.4" height="4.4" fill="#c8caa7"/>
<rect x="969.3" y="908.6" width="5.4" height="4.4" fill="#c8caa7"/>
<rect x="985.1" y="923.8" width="5.4" height="4.4" fill="#c8caa7"/>
<rect x="948.3" y="939.5" width="5.4" height="4.4" fill="#8d9270"/>
<rect x="1283.1" y="939.5" width="5.4" height="4.4" fill="#c8caa7"/>
<rect x="1534.1" y="676.8" width="5.4" height="4.4" fill="#c8caa7"/>
<rect x="1651.8" y="976.6" width="5.4" height="4.4" fill="#8d9270"/>
<rect x="1583.8" y="1002.8" width="5.4" height="4.4" fill="#8d9270"/>
<rect x="1620.3" y="1012.8" width="5.4" height="4.4" fill="#8d9270"/>
<rect x="1458.3" y="1038.8" width="5.4" height="4.4" fill="#8d9270"/>
<rect x="1476.3" y="1096.3" width="5.4" height="4.4" fill="#8d9270"/>
<rect x="1267.3" y="1107.3" width="5.4" height="4.4" fill="#c8caa7"/>
<rect x="1675.3" y="765.8" width="5.4" height="4.4" fill="#8d9270"/>
<rect x="1676.3" y="904.8" width="5.4" height="4.4" fill="#8d9270"/>
<rect x="659.5" y="865.9" width="16.9" height="15.9" fill="#8d9270"/>
<rect x="676.4" y="871.9" width="6.0" height="9.9" fill="#8d9270"/>
<rect x="685.6" y="866.6" width="16.6" height="9.9" fill="#8d9270"/>
<rect x="676.4" y="881.8" width="9.3" height="3.3" fill="#8d9270"/>
<rect x="692.3" y="892.4" width="15.9" height="5.3" fill="#8d9270"/>
<rect x="686.3" y="897.7" width="25.8" height="26.5" fill="#8d9270"/>
<rect x="669.7" y="913.6" width="22.5" height="10.6" fill="#8d9270"/>
<rect x="728.0" y="892.4" width="9.6" height="6.6" fill="#8d9270"/>
<rect x="733.7" y="897.7" width="15.9" height="4.6" fill="#8d9270"/>
<rect x="718.1" y="907.6" width="25.8" height="6.0" fill="#8d9270"/>
<rect x="723.7" y="918.2" width="9.9" height="6.0" fill="#8d9270"/>
<rect x="718.1" y="923.5" width="9.9" height="4.3" fill="#8d9270"/>
<rect x="660.1" y="923.5" width="6.0" height="10.6" fill="#8d9270"/>
<rect x="669.7" y="927.8" width="15.9" height="12.3" fill="#8d9270"/>
<rect x="707.8" y="933.5" width="10.3" height="10.6" fill="#8d9270"/>
<rect x="656.2" y="902.3" width="3.6" height="15.2" fill="#8d9270"/>
<rect x="676.4" y="856.0" width="35.4" height="9.9" fill="#c8caa7"/>
<rect x="707.8" y="871.9" width="10.3" height="20.2" fill="#c8caa7"/>
<rect x="701.9" y="881.1" width="6.0" height="5.0" fill="#c8caa7"/>
<rect x="655.8" y="886.1" width="13.9" height="7.0" fill="#c8caa7"/>
<rect x="659.8" y="891.7" width="16.6" height="6.0" fill="#c8caa7"/>
<rect x="683.0" y="886.1" width="15.2" height="6.3" fill="#c8caa7"/>
<rect x="666.1" y="901.7" width="20.2" height="11.9" fill="#c8caa7"/>
<rect x="681.7" y="892.4" width="10.6" height="5.3" fill="#c8caa7"/>
<rect x="643.9" y="901.7" width="11.9" height="15.9" fill="#c8caa7"/>
<rect x="649.9" y="898.4" width="6.0" height="3.3" fill="#c8caa7"/>
<rect x="649.9" y="917.6" width="9.9" height="6.0" fill="#c8caa7"/>
<rect x="734.3" y="886.1" width="9.6" height="5.6" fill="#c8caa7"/>
<rect x="737.6" y="891.7" width="11.9" height="6.0" fill="#c8caa7"/>
<rect x="718.1" y="897.7" width="5.6" height="9.9" fill="#c8caa7"/>
<rect x="723.7" y="902.3" width="4.3" height="5.3" fill="#c8caa7"/>
<rect x="665.8" y="934.1" width="9.9" height="15.9" fill="#c8caa7"/>
<rect x="675.7" y="940.1" width="6.0" height="4.0" fill="#c8caa7"/>
<rect x="692.3" y="872.5" width="9.6" height="9.3" fill="#4c5139"/>
<rect x="692.3" y="902.3" width="15.6" height="15.2" fill="#4c5139"/>
<rect x="698.2" y="897.7" width="3.6" height="25.8" fill="#4c5139"/>
<rect x="659.5" y="860.3" width="22.2" height="5.6" fill="#181818"/>
<rect x="676.4" y="865.9" width="9.3" height="6.0" fill="#181818"/>
<rect x="682.3" y="866.6" width="3.3" height="15.2" fill="#181818"/>
<rect x="685.6" y="876.5" width="6.0" height="9.6" fill="#181818"/>
<rect x="691.6" y="881.8" width="6.6" height="4.3" fill="#181818"/>
<rect x="702.2" y="866.6" width="21.5" height="5.3" fill="#181818"/>
<rect x="712.1" y="856.0" width="5.3" height="10.6" fill="#181818"/>
<rect x="698.2" y="876.5" width="9.6" height="4.6" fill="#181818"/>
<rect x="698.9" y="881.1" width="3.0" height="10.6" fill="#181818"/>
<rect x="718.1" y="866.6" width="5.6" height="26.5" fill="#181818"/>
<rect x="698.9" y="888.4" width="12.9" height="3.3" fill="#181818"/>
<rect x="708.2" y="891.7" width="15.6" height="6.0" fill="#181818"/>
<rect x="650.2" y="882.5" width="25.5" height="3.6" fill="#181818"/>
<rect x="650.2" y="886.1" width="5.6" height="11.6" fill="#181818"/>
<rect x="655.8" y="893.1" width="4.0" height="4.6" fill="#181818"/>
<rect x="656.2" y="897.7" width="25.5" height="3.6" fill="#181818"/>
<rect x="669.7" y="886.1" width="11.9" height="5.6" fill="#181818"/>
<rect x="676.4" y="891.7" width="5.3" height="9.6" fill="#181818"/>
<rect x="728.4" y="882.5" width="21.2" height="4.0" fill="#181818"/>
<rect x="749.6" y="886.4" width="4.3" height="21.2" fill="#181818"/>
<rect x="723.7" y="886.4" width="9.9" height="6.0" fill="#181818"/>
<rect x="723.7" y="892.4" width="4.3" height="7.9" fill="#181818"/>
<rect x="724.1" y="899.0" width="9.6" height="3.3" fill="#181818"/>
<rect x="728.4" y="902.3" width="25.5" height="5.3" fill="#181818"/>
<rect x="712.1" y="897.7" width="6.0" height="36.4" fill="#181818"/>
<rect x="743.9" y="907.6" width="5.6" height="9.9" fill="#181818"/>
<rect x="718.1" y="913.6" width="31.5" height="4.0" fill="#181818"/>
<rect x="659.8" y="901.3" width="6.3" height="22.2" fill="#181818"/>
<rect x="666.1" y="918.2" width="3.6" height="5.3" fill="#181818"/>
<rect x="666.1" y="924.2" width="25.8" height="3.6" fill="#181818"/>
<rect x="691.6" y="927.8" width="42.1" height="5.6" fill="#181818"/>
<rect x="733.7" y="917.6" width="3.6" height="10.3" fill="#181818"/>
<rect x="728.0" y="924.2" width="5.6" height="9.3" fill="#181818"/>
<rect x="718.1" y="917.6" width="5.6" height="6.0" fill="#181818"/>
<rect x="660.1" y="934.1" width="9.6" height="4.6" fill="#181818"/>
<rect x="656.5" y="938.8" width="9.3" height="16.6" fill="#181818"/>
<rect x="665.8" y="950.0" width="15.9" height="5.3" fill="#181818"/>
<rect x="676.4" y="944.4" width="9.3" height="5.6" fill="#181818"/>
<rect x="682.3" y="938.8" width="9.3" height="5.6" fill="#181818"/>
<rect x="685.6" y="927.8" width="6.0" height="10.9" fill="#181818"/>
<rect x="691.6" y="933.5" width="6.6" height="5.3" fill="#181818"/>
<rect x="701.9" y="933.5" width="6.0" height="10.6" fill="#181818"/>
<rect x="707.8" y="940.8" width="4.0" height="3.3" fill="#181818"/>
<rect x="711.8" y="944.1" width="11.9" height="5.3" fill="#181818"/>
<rect x="718.1" y="933.5" width="5.6" height="10.6" fill="#181818"/>
<g shape-rendering="geometricPrecision">
<rect x="634.5" y="854.7" width="125.2" height="106.5" fill="rgba(116,116,252,0.22)" stroke="#7b7be6" stroke-width="1.6"/>
<circle cx="696.8" cy="822.7" r="8" fill="#f4f4ef" stroke="#7272e4" stroke-width="1.6"/>
<rect x="769" y="899" width="16" height="16" fill="#f4f4ef" stroke="#7272e4" stroke-width="1.7"/>
<rect x="689" y="971" width="16" height="16" fill="#f4f4ef" stroke="#7272e4" stroke-width="1.7"/>
<rect x="769" y="971" width="20" height="20" fill="#f4f4ef" stroke="#7272e4" stroke-width="1.7"/>
</g>
</g>
<rect x="1146" y="256" width="536" height="4" fill="rgba(105,176,224,0.4)"/>
<rect x="584" y="256" width="562" height="4" fill="#69b0df"/>
<rect x="584" y="256" width="4" height="684" fill="#69b0df"/>
<rect x="584" y="940" width="4" height="670" fill="rgba(105,176,224,0.4)"/>
<circle cx="1146" cy="258" r="12" fill="#69b0df"/>
<circle cx="586" cy="940" r="11.5" fill="#69b0df"/>
</svg>
<div class="t" style="left:594.5px;top:1567px;font-size:29px;font-weight:bold;color:#c8c8c8">33;124</div>

<!-- right panel -->
<div class="a" style="left:1682px;top:256px;width:370px;height:1354px;background:#e3e3e3;border-radius:0 0 10px 0"></div>
<div class="a" style="left:1692px;top:256px;width:356px;height:1354px;background:#f0f0f0;border-radius:0 0 8px 0"></div>
<div class="hdr" style="left:1692px;top:256px;width:356px;height:60px"></div>
<div class="hdrt" style="left:1722.7px;top:271.7px">Objects</div>

<div class="a" style="left:1692px;top:316px;width:342px;height:64px;background:#5b93f5"></div>
<div class="t" style="left:1837px;top:334.8px;font-size:28px;color:#fff">Player</div>

<!-- objects rows -->
<div class="dots" style="left:1990px;top:334px"><i></i><i></i><i></i></div>
<div class="a" style="left:1692px;top:443px;width:342px;height:2px;background:#e2e2e2"></div>
<div class="t" style="left:1837px;top:398.4px;font-size:28.5px;color:#1d1d1d">Space...</div>
<div class="dots" style="left:1990px;top:398px"><i></i><i></i><i></i></div>
<div class="a" style="left:1692px;top:507px;width:342px;height:2px;background:#e2e2e2"></div>
<div class="t" style="left:1837px;top:462.4px;font-size:28.5px;color:#1d1d1d">Corrid...</div>
<div class="dots" style="left:1990px;top:462px"><i></i><i></i><i></i></div>
<div class="a" style="left:1692px;top:571px;width:342px;height:2px;background:#e2e2e2"></div>
<div class="t" style="left:1837px;top:526.4px;font-size:28.5px;color:#1d1d1d">Asteroid</div>
<div class="dots" style="left:1990px;top:526px"><i></i><i></i><i></i></div>
<div class="a" style="left:1692px;top:635px;width:342px;height:2px;background:#e2e2e2"></div>
<div class="t" style="left:1837px;top:590.4px;font-size:28.5px;color:#1d1d1d">Enemy2</div>
<div class="dots" style="left:1990px;top:590px"><i></i><i></i><i></i></div>
<div class="a" style="left:1692px;top:699px;width:342px;height:2px;background:#e2e2e2"></div>
<div class="t" style="left:1837px;top:654.4px;font-size:28.5px;color:#1d1d1d">Player...</div>
<div class="dots" style="left:1990px;top:654px"><i></i><i></i><i></i></div>
<div class="a" style="left:1692px;top:763px;width:342px;height:2px;background:#e2e2e2"></div>
<div class="t" style="left:1837px;top:718.4px;font-size:28.5px;color:#1d1d1d">Health...</div>
<div class="dots" style="left:1990px;top:718px"><i></i><i></i><i></i></div>
<div class="a" style="left:1692px;top:827px;width:342px;height:2px;background:#e2e2e2"></div>
<div class="t" style="left:1837px;top:782.4px;font-size:28.5px;color:#1d1d1d">Explosi...</div>
<div class="dots" style="left:1990px;top:782px"><i></i><i></i><i></i></div>
<div class="a" style="left:1692px;top:891px;width:342px;height:2px;background:#e2e2e2"></div>
<div class="t" style="left:1837px;top:846.4px;font-size:28.5px;color:#1d1d1d">Enemy3</div>
<div class="dots" style="left:1990px;top:846px"><i></i><i></i><i></i></div>
<div class="a" style="left:1692px;top:955px;width:342px;height:2px;background:#e2e2e2"></div>
<div class="t" style="left:1837px;top:910.4px;font-size:28.5px;color:#1d1d1d">Enemy...</div>
<div class="dots" style="left:1990px;top:910px"><i></i><i></i><i></i></div>
<div class="a" style="left:1692px;top:1019px;width:342px;height:2px;background:#e2e2e2"></div>
<div class="t" style="left:1837px;top:974.4px;font-size:28.5px;color:#1d1d1d">Enemy1</div>
<div class="dots" style="left:1990px;top:974px"><i></i><i></i><i></i></div>
<div class="a" style="left:1692px;top:1083px;width:342px;height:2px;background:#e2e2e2"></div>
<div class="t" style="left:1837px;top:1038.4px;font-size:28.5px;color:#1d1d1d">Attack...</div>
<div class="dots" style="left:1990px;top:1038px"><i></i><i></i><i></i></div>
<div class="a" style="left:2036px;top:318px;width:12px;height:316px;border-radius:6px;background:#a3a3a3"></div>
<div class="a" style="left:2036px;top:634px;width:12px;height:409px;border-radius:0 0 6px 6px;background:#e0e0e0"></div>
<svg class="a" style="left:0;top:0" width="2164" height="1770" viewBox="0 0 2164 1770">
<polygon points="1733.0,333.0 1740.0,333.0 1745.0,340.0 1750.0,336.0 1752.0,333.0 1755.0,340.0 1760.0,338.0 1767.0,342.0 1768.0,350.0 1762.0,354.0 1757.0,352.0 1757.0,360.0 1750.0,360.0 1746.0,357.0 1742.0,364.0 1735.0,367.0 1733.0,360.0 1737.0,354.0 1730.0,352.0 1728.0,346.0 1735.0,343.0" fill="#9ea283" stroke="#232323" stroke-width="2.2" stroke-linejoin="round"/>
<polygon points="1740.0,346.0 1750.0,344.0 1754.0,350.0 1748.0,356.0 1740.0,354.0" fill="#5c6147"/>
<polygon points="1734.0,336.0 1740.0,336.0 1742.0,341.0 1736.0,342.0" fill="#c5c8a3"/>
<polygon points="1758.0,342.0 1765.0,343.0 1765.0,349.0 1759.0,348.0" fill="#c5c8a3"/>
<polygon points="1736.0,358.0 1741.0,356.0 1740.0,363.0 1736.0,364.0" fill="#c5c8a3"/>
<rect x="1724.0" y="402.0" width="48.0" height="26.0" fill="#232323"/>
<rect x="1724.0" y="405.0" width="48.0" height="20.0" fill="#4c5139"/>
<polygon points="1724.0,472.0 1772.0,472.0 1769.0,479.0 1772.0,486.0 1724.0,486.0 1727.0,479.0" fill="#b5b893"/>
<path d="M1732 472 Q1729 479 1732 486" stroke="#5c6147" stroke-width="1.2" fill="none"/>
<path d="M1740 472 Q1737 479 1740 486" stroke="#5c6147" stroke-width="1.2" fill="none"/>
<path d="M1748 472 Q1745 479 1748 486" stroke="#5c6147" stroke-width="1.2" fill="none"/>
<path d="M1756 472 Q1753 479 1756 486" stroke="#5c6147" stroke-width="1.2" fill="none"/>
<path d="M1764 472 Q1761 479 1764 486" stroke="#5c6147" stroke-width="1.2" fill="none"/>
<rect x="1724.0" y="484.5" width="48.0" height="1.5" fill="#5c6147"/>
<circle cx="1746.7" cy="541.9" r="11.8" fill="#9ea283" stroke="#232323" stroke-width="2.3"/>
<polygon points="1748.0,534.0 1755.0,537.0 1756.0,546.0 1750.0,550.0 1746.0,546.0 1751.0,541.0" fill="#5c6147"/>
<polygon points="1738.0,539.0 1742.0,538.0 1742.0,542.0" fill="#5c6147"/>
<polygon points="1731.0,593.0 1748.0,592.0 1748.0,598.0 1740.0,598.0 1738.0,603.0 1748.0,602.0 1750.0,604.0 1769.0,604.0 1769.0,609.0 1752.0,609.0 1748.0,612.0 1742.0,617.0 1733.0,617.0 1726.0,611.0 1725.0,601.0" fill="#c5c8a3" stroke="#232323" stroke-width="2.2" stroke-linejoin="round"/>
<polygon points="1738.0,604.0 1746.0,604.0 1746.0,612.0 1740.0,612.0" fill="#9ea283"/>
<rect x="1738.5" y="660.5" width="19" height="8" rx="3.5" fill="#9ea283" stroke="#232323" stroke-width="1.6"/>
<rect x="1738.5" y="673.3" width="19" height="8" rx="3.5" fill="#9ea283" stroke="#232323" stroke-width="1.6"/>
<rect x="1743.0" y="662.5" width="10.0" height="2.0" fill="#c5c8a3"/>
<rect x="1743.0" y="675.3" width="10.0" height="2.0" fill="#c5c8a3"/>
<polygon points="1730.0,723.5 1736.0,723.5 1739.0,727.0 1755.0,727.0 1758.0,723.5 1764.0,723.5 1763.0,731.0 1758.0,736.0 1753.0,741.0 1741.0,741.0 1736.0,736.0 1731.0,731.0" fill="#232323"/>
<polygon points="1732.0,725.0 1736.0,725.0 1738.0,731.0 1735.0,734.0" fill="#9ea283"/>
<polygon points="1762.0,725.0 1758.0,725.0 1756.0,731.0 1759.0,734.0" fill="#9ea283"/>
<rect x="1740" y="727.5" width="14" height="12.5" rx="3" fill="#9ea283" stroke="#232323" stroke-width="1.5"/>
<circle cx="1747" cy="733.5" r="3.4" fill="#c5c8a3" stroke="#232323" stroke-width="1.3"/>
<circle cx="1748.9" cy="797.6" r="9.6" fill="#c5c8a3" stroke="#232323" stroke-width="2"/>
<polygon points="1741.0,842.0 1745.0,838.5 1749.0,838.5 1743.0,848.0 1752.0,840.0 1763.0,840.0 1763.0,850.0 1767.0,854.0 1767.0,860.0 1760.0,864.0 1756.0,868.0 1763.0,866.0 1763.0,885.0 1758.0,885.0 1750.0,876.0 1744.0,880.0 1732.0,879.0 1728.0,870.0 1728.0,858.0 1735.0,851.0 1742.0,850.0" fill="#c5c8a3" stroke="#232323" stroke-width="2" stroke-linejoin="round"/>
<polygon points="1740.0,856.0 1762.0,857.0 1762.0,862.0 1745.0,863.0 1742.0,872.0 1737.0,870.0 1736.0,860.0" fill="#9ea283"/>
<polygon points="1750.0,846.0 1760.0,843.0 1757.0,852.0 1748.0,853.0" fill="#9ea283"/>
<polygon points="1747.0,919.5 1752.0,919.5 1752.0,925.0 1746.0,931.5 1741.5,931.5 1741.5,926.0" fill="#9ea283" stroke="#232323" stroke-width="1.8" stroke-linejoin="round"/>
<polygon points="1738.0,969.5 1746.0,969.5 1748.0,973.0 1756.0,972.0 1758.0,977.0 1762.0,981.0 1762.0,996.0 1757.0,998.0 1758.0,1004.0 1754.0,1010.0 1746.0,1011.5 1740.0,1008.0 1733.0,1010.0 1730.0,1003.0 1736.0,999.0 1731.0,995.0 1733.0,988.0 1737.0,985.0 1730.0,981.0 1731.0,975.0" fill="#c5c8a3" stroke="#232323" stroke-width="2" stroke-linejoin="round"/>
<polygon points="1740.0,985.0 1752.0,983.0 1754.0,990.0 1760.0,990.0 1760.0,994.0 1748.0,996.0 1738.0,994.0" fill="#9ea283"/>
<polygon points="1746.0,989.0 1752.0,989.0 1752.0,992.0 1746.0,992.0" fill="#232323"/>
</svg>
<div class="a" style="left:1692px;top:1045px;width:356px;height:53px;background:#fff"></div>
<div class="t" style="left:1708.4px;top:1061px;font-size:31px;color:#a0a0a0">Search</div>

<div class="a" style="left:1692px;top:1098px;width:356px;height:8px;background:#e3e3e3"></div>
<div class="hdr" style="left:1692px;top:1106px;width:356px;height:60px"></div>
<div class="hdrt" style="left:1722px;top:1122px;font-size:30px">Layers</div>
<div class="a" style="left:1692px;top:1166px;width:356px;height:255px;background:#fff"></div>
<div class="t" style="left:1765px;top:1182.6px;font-size:32px;color:#1d1d1d">UI</div>
<div class="t" style="left:1765px;top:1246.7px;font-size:32px;color:#a0a0a0">Base layer</div>
<div class="t" style="left:1765px;top:1310.2px;font-size:32px;color:#1d1d1d">Background</div>
<div class="t" style="left:1765px;top:1374.9px;font-size:32px;color:#a0a0a0;width:167px;overflow:hidden">Background color</div>

<div class="a" style="left:1770px;top:1430px;width:262px;height:64px;background:#69b0df;box-shadow:0 2px 5px rgba(0,0,0,.33)"></div>
<div class="t" style="left:1847.3px;top:1450.6px;font-size:25.5px;font-weight:normal;-webkit-text-stroke:0.6px #fff;color:#fff">ADD A LAYER</div>
<!-- material icons -->
<svg class="a" style="left:538.86px;top:210.57px" width="34.29" height="30.86" viewBox="0 0 24 24" preserveAspectRatio="none"><path d="M19 6.41L17.59 5 12 10.59 6.41 5 5 6.41 10.59 12 5 17.59 6.41 19 12 13.41 17.59 19 19 17.59 13.41 12z" fill="#7f7f7f"/></svg>
<svg class="a" style="left:704.49px;top:210.57px" width="34.11" height="30.86" viewBox="0 0 24 24" preserveAspectRatio="none"><path d="M19 6.41L17.59 5 12 10.59 6.41 5 5 6.41 10.59 12 5 17.59 6.41 19 12 13.41 17.59 19 19 17.59 13.41 12z" fill="#fff"/></svg>
<svg class="a" style="left:528.57px;top:273.26px" width="30.86" height="29.49" viewBox="0 0 24 24" preserveAspectRatio="none"><path d="M19 6.41L17.59 5 12 10.59 6.41 5 5 6.41 10.59 12 5 17.59 6.41 19 12 13.41 17.59 19 19 17.59 13.41 12z" fill="#fff"/></svg>
<svg class="a" style="left:2000.57px;top:272.57px" width="30.86" height="30.86" viewBox="0 0 24 24" preserveAspectRatio="none"><path d="M19 6.41L17.59 5 12 10.59 6.41 5 5 6.41 10.59 12 5 17.59 6.41 19 12 13.41 17.59 19 19 17.59 13.41 12z" fill="#fff"/></svg>
<svg class="a" style="left:1999.74px;top:1122.57px" width="32.91" height="30.86" viewBox="0 0 24 24" preserveAspectRatio="none"><path d="M19 6.41L17.59 5 12 10.59 6.41 5 5 6.41 10.59 12 5 17.59 6.41 19 12 13.41 17.59 19 19 17.59 13.41 12z" fill="#fff"/></svg>
<svg class="a" style="left:1936.00px;top:272.00px" width="32.00" height="32.00" viewBox="0 0 24 24" preserveAspectRatio="none"><path d="M10 18h4v-2h-4v2zM3 6v2h18V6H3zm3 7h12v-2H6v2z" fill="#fff"/></svg>
<svg class="a" style="left:425.42px;top:361.68px" width="48.67" height="48.13" viewBox="0 0 24 24" preserveAspectRatio="none"><path d="M3 17.25V21h3.75L17.81 9.94l-3.75-3.75L3 17.25zM20.71 7.04c.39-.39.39-1.02 0-1.41l-2.34-2.34c-.39-.39-1.02-.39-1.41 0l-1.83 1.83 3.75 3.75 1.83-1.83z" fill="#fff"/></svg>
<svg class="a" style="left:430.00px;top:1396.00px" width="48.00" height="48.00" viewBox="0 0 24 24" preserveAspectRatio="none"><path d="M19 13h-6v6h-2v-6H5v-2h6V5h2v6h6v2z" fill="#fff"/></svg>
<svg class="a" style="left:1790.00px;top:1438.50px" width="48.00" height="48.00" viewBox="0 0 24 24" preserveAspectRatio="none"><path d="M19 13h-6v6h-2v-6H5v-2h6V5h2v6h6v2z" fill="#fff"/></svg>
<svg class="a" style="left:498.00px;top:867.10px" width="48.00" height="49.44" viewBox="0 0 24 24" preserveAspectRatio="none"><path d="M7 10l5 5 5-5z" fill="#6e6e6e"/></svg>
<svg class="a" style="left:488.00px;top:1236.08px" width="48.00" height="47.33" viewBox="0 0 24 24" preserveAspectRatio="none"><path d="M19 19H5V5h7V3H5c-1.11 0-2 .9-2 2v14c0 1.1.89 2 2 2h14c1.1 0 2-.9 2-2v-7h-2v7zM14 3v2h3.59l-9.83 9.83 1.41 1.41L19 6.41V10h2V3h-7z" fill="#111"/></svg>
<svg class="a" style="left:138.03px;top:1396.01px" width="47.62" height="47.67" viewBox="0 0 24 24" preserveAspectRatio="none"><path d="M16 1H4c-1.1 0-2 .9-2 2v14h2V3h12V1zm3 4H8c-1.1 0-2 .9-2 2v14c0 1.1.9 2 2 2h11c1.1 0 2-.9 2-2V7c0-1.1-.9-2-2-2zm0 16H8V7h11v14z" fill="#b3b3b3"/></svg>
<svg class="a" style="left:198.00px;top:1396.00px" width="48.00" height="47.78" viewBox="0 0 24 24" preserveAspectRatio="none"><path d="M19 2h-4.18C14.4.84 13.3 0 12 0c-1.3 0-2.4.84-2.82 2H5c-1.1 0-2 .9-2 2v16c0 1.1.9 2 2 2h14c1.1 0 2-.9 2-2V4c0-1.1-.9-2-2-2zm-7 0c.55 0 1 .45 1 1s-.45 1-1 1-1-.45-1-1 .45-1 1-1zm7 18H5V4h2v3h10V4h2v16z" fill="#b3b3b3"/></svg>
<svg class="a" style="left:257.73px;top:1396.10px" width="48.34" height="47.20" viewBox="0 0 24 24" preserveAspectRatio="none"><path d="M6 19c0 1.1.9 2 2 2h8c1.1 0 2-.9 2-2V7H6v12zM19 4h-3.5l-1-1h-5l-1 1H5v2h14V4z" fill="#b3b3b3"/></svg>
<svg class="a" style="left:1994.17px;top:1052.58px" width="46.66" height="46.59" viewBox="0 0 24 24" preserveAspectRatio="none"><path d="M15.5 14h-.79l-.28-.27C15.41 12.59 16 11.11 16 9.5 16 5.91 13.09 3 9.5 3S3 5.91 3 9.5 5.91 16 9.5 16c1.61 0 3.09-.59 4.23-1.57l.27.28v.79l5 4.99L20.49 19l-4.99-5zm-6 0C7.01 14 5 11.99 5 9.5S7.01 5 9.5 5 14 7.01 14 9.5 11.99 14 9.5 14z" fill="#808080"/></svg>
<div class="a" style="left:1708px;top:1187.9px;width:32px;height:3.7px;background:#dadada"></div>
<div class="a" style="left:1708px;top:1196.1px;width:32px;height:3.7px;background:#dadada"></div>
<div class="a" style="left:1765px;top:1227.9px;width:199px;height:2px;background:#ababab"></div>
<div class="dots" style="left:2005.7px;top:1181.5px"><i></i><i></i><i></i></div>
<div class="a" style="left:1708px;top:1251.9px;width:32px;height:3.7px;background:#dadada"></div>
<div class="a" style="left:1708px;top:1260.1px;width:32px;height:3.7px;background:#dadada"></div>
<div class="a" style="left:1765px;top:1291.9px;width:199px;height:0;border-top:2px dotted #9a9a9a"></div>
<div class="dots" style="left:2005.7px;top:1245.5px"><i></i><i></i><i></i></div>
<div class="a" style="left:1708px;top:1315.9px;width:32px;height:3.7px;background:#dadada"></div>
<div class="a" style="left:1708px;top:1324.1px;width:32px;height:3.7px;background:#dadada"></div>
<div class="a" style="left:1765px;top:1355.4px;width:199px;height:2px;background:#ababab"></div>
<div class="dots" style="left:2005.7px;top:1309.5px"><i></i><i></i><i></i></div>
<div class="a" style="left:1708px;top:1379.9px;width:32px;height:3.7px;background:#ebebeb"></div>
<div class="a" style="left:1708px;top:1388.1px;width:32px;height:3.7px;background:#ebebeb"></div>
<div class="a" style="left:1765px;top:1419.4px;width:167px;height:0;border-top:2px dotted #9a9a9a"></div>
<div class="a" style="left:1946.5px;top:1360.8px;width:95.2px;height:50.2px;background:#fff;border:2px solid #e3e3e3;border-radius:4px"></div>
<div class="a" style="left:1957.8px;top:1371.7px;width:72.2px;height:28.1px;background:#000;border-radius:5px"></div>
<div class="a" style="left:1844px;top:1102px;width:50px;height:2px;background:#bdbdbd"></div>
</body></html>
